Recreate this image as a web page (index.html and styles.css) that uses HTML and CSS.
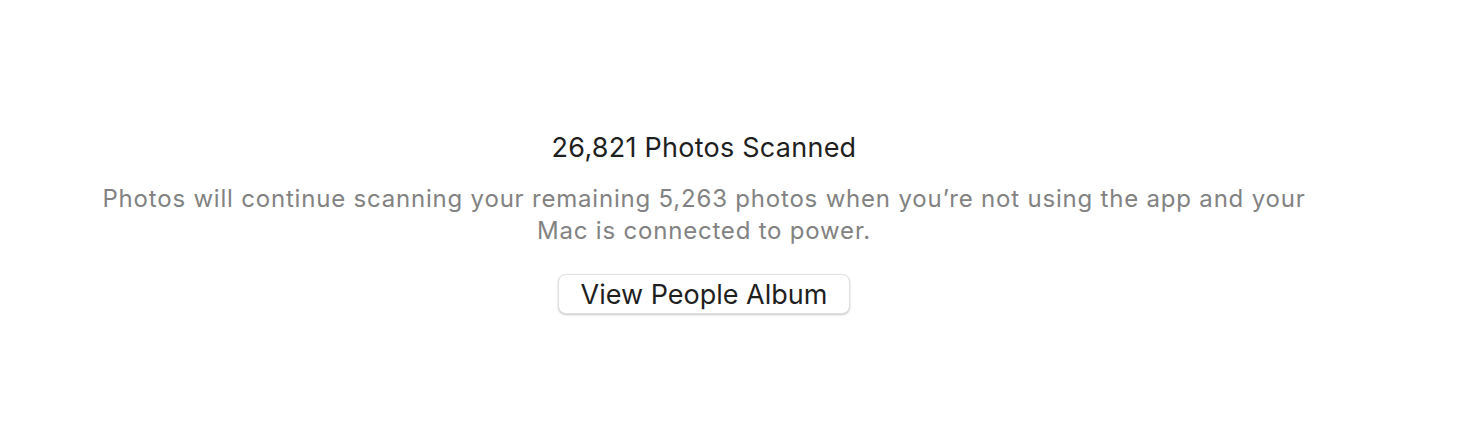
FILE: index.html
```html
<!DOCTYPE html>
<html lang="en">
<head>
  <meta charset="UTF-8">
  <title>People Scanning</title>
  <link rel="stylesheet" href="styles.css">
</head>
<body>
  <div class="status">
    <h2 class="title">26,821 Photos Scanned</h2>
    <p class="desc">Photos will continue scanning your remaining 5,263 photos when you’re not using the app and your Mac is connected to power.</p>
    <button type="button" class="album-btn">View People Album</button>
  </div>
</body>
</html>
```

FILE: styles.css
```css
body {
  font-family: Inter, "Noto Sans", sans-serif;
  background-color: #fff;
  margin: 0;
  height: 448px;
  display: flex;
  justify-content: center;
  padding-right: 64px;
}

.status {
  display: flex;
  flex-direction: column;
  align-items: center;
  padding-top: 131px;
  width: 1220px;
}

.title {
  margin: 0;
  font-size: 27px;
  font-weight: 400;
  letter-spacing: 0.25px;
  line-height: 34px;
  color: #1f1f1f;
}

.desc {
  margin: 18px 0 0;
  font-size: 24px;
  letter-spacing: 0.8px;
  line-height: 32px;
  color: #828282;
  text-align: center;
}

.album-btn {
  margin-top: 27px;
  width: 292px;
  height: 40px;
  padding: 0;
  font-family: inherit;
  font-size: 27px;
  color: #1f1f1f;
  background-color: #fff;
  border: 1px solid #e0e0e0;
  border-radius: 8px;
  box-shadow: 0 1px 2px rgba(0, 0, 0, 0.22);
  cursor: pointer;
}
```
